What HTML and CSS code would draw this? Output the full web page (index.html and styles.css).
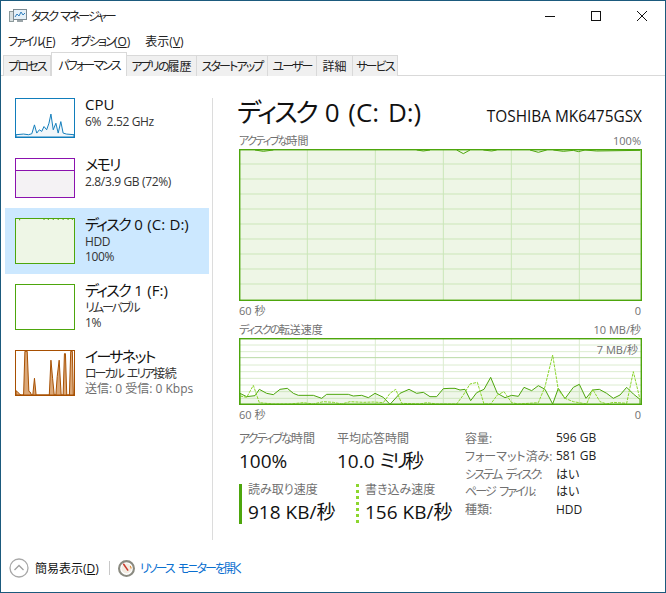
FILE: index.html
```html
<!DOCTYPE html>
<html lang="ja">
<head>
<meta charset="utf-8">
<title>タスク マネージャー</title>
<link rel="stylesheet" href="styles.css">
</head>
<body>
<div class="window">
  <header class="titlebar">
    <svg class="app-icon" viewBox="0 0 18 16" width="18" height="16">
      <rect class="ai-tower" x="0.5" y="3.5" width="4" height="10"/>
      <rect class="ai-screen" x="4.5" y="1.5" width="13" height="10"/>
      <polyline class="ai-line" points="6,9 8,6 10,8 12,4 14,7 16,5"/>
      <rect class="ai-stand" x="8" y="12" width="6" height="2"/>
    </svg>
    <span class="title">タスク マネージャー</span>
    <div class="controls">
      <span class="ctl"><svg viewBox="0 0 10 10" width="10" height="10"><path class="ctl-s" d="M0 5.5H10"/></svg></span>
      <span class="ctl"><svg viewBox="0 0 10 10" width="10" height="10"><rect class="ctl-s" x="0.5" y="0.5" width="9" height="9"/></svg></span>
      <span class="ctl"><svg viewBox="0 0 10 10" width="10" height="10"><path class="ctl-s" d="M0 0L10 10M10 0L0 10"/></svg></span>
    </div>
  </header>
  <nav class="menu">
    <span><span class="k">ファイル</span>(<u>F</u>)</span>
    <span><span class="k">オプション</span>(<u>O</u>)</span>
    <span>表示(<u>V</u>)</span>
  </nav>
  <div class="tabs">
    <span class="tab t1"><span class="k">プロセス</span></span>
    <span class="tab t2 active"><span class="k">パフォーマンス</span></span>
    <span class="tab t3"><span class="k">アプリの</span>履歴</span>
    <span class="tab t4"><span class="k">スタートアップ</span></span>
    <span class="tab t5"><span class="k">ユーザー</span></span>
    <span class="tab t6">詳細</span>
    <span class="tab t7"><span class="k">サービス</span></span>
  </div>
  <div class="content">
    <aside class="sidebar">
      <div class="item short">
        <div class="thumb cpu">
          <svg viewBox="47 26 176 116" preserveAspectRatio="none">
            <path class="cpu-fill" d="M47 135L70 133L85 135L95 132L103 105L110 130L118 120L125 125L132 110L140 120L147 100L153 72L160 120L168 100L175 130L183 95L190 130L200 133L223 135V142H47Z"/>
          </svg>
        </div>
        <div class="info"><div class="name">CPU</div><div class="sub">6%&nbsp; 2.52 GHz</div></div>
      </div>
      <div class="item short">
        <div class="thumb mem">
          <svg viewBox="0 0 58 38" preserveAspectRatio="none"><rect class="mem-fill" x="0" y="11" width="58" height="27"/><path class="mem-line" d="M0 11.5H58"/></svg>
        </div>
        <div class="info"><div class="name"><span class="k">メモリ</span></div><div class="sub">2.8/3.9 GB (72%)</div></div>
      </div>
      <div class="item selected">
        <div class="thumb disk filled">
          <svg viewBox="47 386 176 134" preserveAspectRatio="none"><path class="disk-ticks" d="M58 386V390M132 386V389M145 386V389M160 386V389M175 386V389M190 386V389M205 386V389M218 386V389"/></svg>
        </div>
        <div class="info"><div class="name"><span class="k">ディスク</span> 0 (C: D:)</div><div class="sub">HDD</div><div class="sub">100%</div></div>
      </div>
      <div class="item">
        <div class="thumb disk"></div>
        <div class="info"><div class="name"><span class="k">ディスク</span> 1 (F:)</div><div class="sub"><span class="k">リムーバブル</span></div><div class="sub">1%</div></div>
      </div>
      <div class="item">
        <div class="thumb eth">
          <svg viewBox="47 227 176 134" preserveAspectRatio="none">
            <path class="eth-fill" d="M47 361V348L52 352L58 358L62 361H70L74 228H81L86 350L90 352L94 361H98L103 310L108 361H148L153 255L158 310L163 361H168L172 305L178 255L184 361H190L194 235H197L201 361H209L213 228H218L221 361H223V361Z"/>
          </svg>
        </div>
        <div class="info"><div class="name"><span class="k">イーサネット</span></div><div class="sub"><span class="k">ローカル エリア</span>接続</div><div class="sub muted">送信: 0 受信: 0 Kbps</div></div>
      </div>
    </aside>
    <div class="divider"></div>
    <main class="main">
      <div class="head"><h1><span class="k">ディスク</span> 0 (C: D:)</h1><span class="model">TOSHIBA MK6475GSX</span></div>
      <div class="axis label-row"><span><span class="k">アクティブな</span>時間</span><span>100%</span></div>
      <svg class="chart-a" viewBox="27 180 1209 456">
        <rect class="plot" x="29" y="182" width="1205" height="452"/>
        <path class="grid" d="M232 182V634M436 182V634M640 182V634M844 182V634M1048 182V634M29 225H1234M29 270H1234M29 315H1234M29 360H1234M29 405H1234M29 450H1234M29 495H1234M29 540H1234M29 585H1234"/>
        <path class="top-dip" d="M75 183L100 187L130 183M560 183L580 186L600 183M680 183L700 194L720 183M760 183L785 186L800 183M900 183L925 190L950 183M970 183L1000 187L1030 184L1045 188L1065 183L1100 186L1230 184"/>
        <rect class="frame" x="29" y="182" width="1205" height="452"/>
      </svg>
      <div class="axis"><span>60 秒</span><span>0</span></div>
      <div class="axis label-row2"><span><span class="k">ディスクの</span>転送速度</span><span>10 MB/秒</span></div>
      <div class="chart-wrap">
        <svg class="chart-b" viewBox="27 144 1209 201">
          <rect class="plot-white" x="29" y="146" width="1205" height="197"/>
          <path class="grid" d="M232 146V343M436 146V343M640 146V343M844 146V343M1048 146V343M29 165H1234M29 185H1234M29 225H1234M29 245H1234M29 265H1234M29 285H1234M29 305H1234M29 325H1234"/>
          <path class="grid-strong" d="M29 203H1234"/>
          <path class="area" d="M30 310L50 320L75 317L88 298L110 310L130 314L150 298L172 295L190 310L205 316L250 316L275 325L290 313L355 313L370 318L395 316L415 323L435 310L460 322L480 343L510 310L537 298L560 310L580 307L600 320L620 320L640 296L660 295L675 295L690 300L705 298L722 332L740 308L762 298L782 262L802 310L825 323L845 316L865 319L882 292L905 302L925 287L945 298L968 342L985 295L1005 326L1030 292L1048 283L1068 325L1088 300L1108 298L1130 310L1150 325L1170 315L1190 292L1210 312L1230 328V343H30Z"/>
          <polyline class="write" points="30,318 50,322 70,286 88,338 130,342 180,342 220,338 250,342 280,335 310,337 335,342 360,335 400,337 430,336 460,338 480,310 497,298 515,340 570,342 590,338 620,342 680,342 700,315 720,282 742,277 762,342 782,342 802,315 822,305 845,338 865,342 925,338 945,290 968,195 985,300 1005,325 1030,335 1070,342 1088,298 1110,335 1130,342 1150,337 1190,340 1210,245 1230,328"/>
          <rect class="frame" x="29" y="146" width="1205" height="197"/>
        </svg>
        <span class="overlay">7 MB/秒</span>
      </div>
      <div class="axis"><span>60 秒</span><span>0</span></div>
      <section class="stats">
        <div class="stats-left">
          <div class="stat-row">
            <div class="stat w98"><div class="stat-label"><span class="k">アクティブな</span>時間</div><div class="stat-value">100%</div></div>
            <div class="stat"><div class="stat-label">平均応答時間</div><div class="stat-value">10.0 <span class="k">ミリ</span>秒</div></div>
          </div>
          <div class="rate-row">
            <div class="rate read"><div class="stat-label">読み取り速度</div><div class="stat-value">918 KB/秒</div></div>
            <div class="rate write-rate"><div class="stat-label">書き込み速度</div><div class="stat-value">156 KB/秒</div></div>
          </div>
        </div>
        <dl class="props">
          <dt>容量:</dt><dd>596 GB</dd>
          <dt>フォーマット済み:</dt><dd>581 GB</dd>
          <dt><span class="k">システム ディスク</span>:</dt><dd>はい</dd>
          <dt><span class="k">ページ ファイル</span>:</dt><dd>はい</dd>
          <dt>種類:</dt><dd>HDD</dd>
        </dl>
      </section>
    </main>
  </div>
  <footer class="footer">
    <svg class="chev" viewBox="0 0 20 20" width="20" height="20"><circle class="chev-ring" cx="10" cy="10" r="9"/><path class="chev-mark" d="M5.5 12L10 7.5L14.5 12"/></svg>
    <span class="fewer">簡易表示(<u>D</u>)</span>
    <span class="sep"></span>
    <svg class="gauge" viewBox="0 0 16 16" width="17" height="17"><circle class="g-ring" cx="8" cy="8" r="7"/><circle class="g-face" cx="8" cy="8" r="4.8"/><path class="g-needle" d="M5 3.5L9.5 10"/><path class="g-tick" d="M11.5 5.5L12.5 8"/></svg>
    <span class="link">リソース モニターを開く</span>
  </footer>
</div>
</body>
</html>
```
FILE: styles.css
```css
* { box-sizing: border-box; }
html, body { margin: 0; padding: 0; }
body { background: #fff; font-family: "Open Sans", "Noto Sans CJK JP", sans-serif; color: #1a1a1a; font-feature-settings: "palt"; }
.k { letter-spacing: -0.155em; word-spacing: 3px; }
.window { width: 666px; height: 593px; border: 1px solid #1b5a7d; background: #fff; overflow: hidden; display: flex; flex-direction: column; }
.titlebar { height: 29px; display: flex; align-items: center; padding-left: 8px; flex: none; }
.app-icon { flex: none; margin-right: 4px; }
.ai-tower { fill: #d8dfe0; stroke: #8c9a9c; }
.ai-screen { fill: #e4f0f8; stroke: #7b8a92; }
.ai-line { fill: none; stroke: #2f7fbf; stroke-width: 1; }
.ai-stand { fill: #9aa4a8; }
.title { font-size: 12px; color: #222; white-space: nowrap; letter-spacing: -2px; word-spacing: 2px; }
.controls { margin-left: auto; display: flex; }
.ctl { width: 46px; height: 29px; display: flex; align-items: center; justify-content: center; }
.ctl-s { fill: none; stroke: #111; stroke-width: 1; }
.menu { height: 23px; display: flex; gap: 15px; padding: 0 0 2px 7px; align-items: center; font-size: 12px; flex: none; color: #222; white-space: nowrap; }
.tabs { height: 23px; flex: none; display: flex; padding-left: 2px; border-bottom: 1px solid #d9d9d9; align-items: flex-end; }
.tab { height: 21px; background: #f0f0f0; border: 1px solid #d9d9d9; border-left: 0; border-bottom: 0; font-size: 12px; display: flex; align-items: center; justify-content: center; color: #222; margin-bottom: -1px; white-space: nowrap; }
.t1 { width: 48px; border-left: 1px solid #d9d9d9; }
.t2 { width: 76px; }
.t3 { width: 70px; }
.t4 { width: 71px; }
.t5 { width: 49px; }
.t6 { width: 36px; }
.t7 { width: 45px; }
.tab.active { height: 24px; background: #fff; border-left: 1px solid #d9d9d9; margin-bottom: -1px; }
.content { flex: 1; display: flex; min-height: 0; }
.sidebar { width: 211px; padding: 12px 0 0 4px; flex: none; }
.item { height: 66px; width: 204px; padding: 10px; display: flex; gap: 10px; }
.item.short { height: 60px; }
.item.selected { background: #cce8ff; }
.thumb { width: 60px; flex: none; border: 1.5px solid #000; background: #fff; overflow: hidden; }
.thumb svg { width: 100%; height: 100%; display: block; }
.thumb.cpu { border-color: #117dbb; }
.cpu-fill { fill: #f1f6fa; stroke: #117dbb; stroke-width: 3; }
.thumb.mem { border-color: #8b12ae; }
.mem-fill { fill: #f4f2f4; }
.mem-line { stroke: #8b12ae; stroke-width: 1; fill: none; }
.thumb.disk { border-color: #4da60c; }
.thumb.filled { background: #eef6e6; }
.disk-ticks { stroke: #4da60c; stroke-width: 3; fill: none; }
.thumb.eth { border-color: #a74f01; }
.eth-fill { fill: #dba878; stroke: #a74f01; stroke-width: 3; }
.info { margin-top: -4px; min-width: 0; white-space: nowrap; }
.name { font-size: 15px; line-height: 20px; color: #111; word-spacing: 0.5px; }
.name .k { letter-spacing: -0.11em; }
.sub { font-size: 12px; line-height: 15px; color: #333; letter-spacing: -0.35px; }
.sub .k { letter-spacing: -0.17em; }
.sub.muted { color: #6d6d6d; letter-spacing: 0; }
.divider { width: 1px; flex: none; margin-top: 22px; height: 442px; background: #dcdcdc; }
.main { flex: none; width: 403px; margin-left: 26px; padding-top: 19px; }
.head { height: 32px; display: flex; justify-content: space-between; align-items: center; }
h1 { margin: 1px 0 0 -2px; font-size: 26px; font-weight: 400; color: #111; line-height: 32px; white-space: nowrap; word-spacing: 2px; }
h1 .k { letter-spacing: -0.1em; }
.model { font-size: 15.4px; margin-top: 10px; color: #111; white-space: nowrap; }
.axis { height: 14px; display: flex; justify-content: space-between; align-items: center; font-size: 11px; color: #707070; margin-top: 2px; width: 402px; }
.label-row { margin-top: 6px; margin-bottom: 2px; }
.label-row2 { margin-top: 5px; margin-bottom: 2px; }
.chart-a { display: block; width: 403px; height: 152px; }
.chart-b { display: block; width: 403px; height: 67px; }
.chart-wrap { position: relative; }
.overlay { position: absolute; right: 4px; top: 3px; font-size: 11px; color: #707070; }
.plot { fill: #eef6e6; }
.plot-white { fill: #fff; }
.grid { fill: none; stroke: #dcecd0; stroke-width: 3; }
.chart-a .grid { stroke: #cbe6b8; }
.grid-strong { fill: none; stroke: #b8d9a4; stroke-width: 3; }
.top-dip { fill: none; stroke: #4da60c; stroke-width: 3; }
.frame { fill: none; stroke: #4da60c; stroke-width: 4.5; }
.area { fill: rgba(77, 166, 12, 0.09); stroke: #4da60c; stroke-width: 3; }
.write { fill: none; stroke: #8cd62e; stroke-width: 3; stroke-dasharray: 9 3; }
.stats { display: flex; margin-top: 11px; width: 402px; }
.stats-left { width: 226px; flex: none; }
.stat-row { display: flex; }
.w98 { width: 98px; flex: none; }
.stat-label { font-size: 12px; line-height: 14px; color: #707070; white-space: nowrap; }
.stat-value { font-size: 19px; line-height: 28px; color: #111; margin-top: 1px; white-space: nowrap; }
.rate-row { display: flex; margin-top: 9px; }
.rate { height: 40px; padding-left: 6px; }
.rate .stat-value { margin-top: 2px; line-height: 26px; }
.rate .stat-label { margin-top: -1px; }
.read { width: 117px; border-left: 3px solid #4da60c; flex: none; }
.write-rate { padding-left: 9px; background: linear-gradient(#8cd62e 50%, transparent 50%) left top / 3px 6px repeat-y; }
.props { margin: -3px 0 0; display: grid; grid-template-columns: 91px auto; grid-auto-rows: 17.8px; font-size: 12px; align-items: center; }
.props dt { color: #707070; white-space: nowrap; }
.props dd { margin: 0; color: #222; }
.footer { flex: none; height: 40px; display: flex; align-items: center; padding: 0 0 8px 8px; font-size: 12px; white-space: nowrap; }
.chev-ring { fill: none; stroke: #a8a8a8; stroke-width: 1.3; }
.chev-mark { fill: none; stroke: #a0a0a0; stroke-width: 1.3; }
.fewer { margin-left: 6px; color: #111; }
.sep { width: 1px; height: 14px; background: #c8c8c8; margin: 0 8px 0 10px; }
.g-ring { fill: #fff; stroke: #8a8a80; stroke-width: 2; }
.g-face { fill: #f3ece2; }
.g-needle { stroke: #c8372a; stroke-width: 1.4; fill: none; }
.g-tick { stroke: #e08a30; stroke-width: 1; fill: none; }
.link { margin-left: 5px; color: #0a6fd0; letter-spacing: -1.95px; word-spacing: 3px; }
```
